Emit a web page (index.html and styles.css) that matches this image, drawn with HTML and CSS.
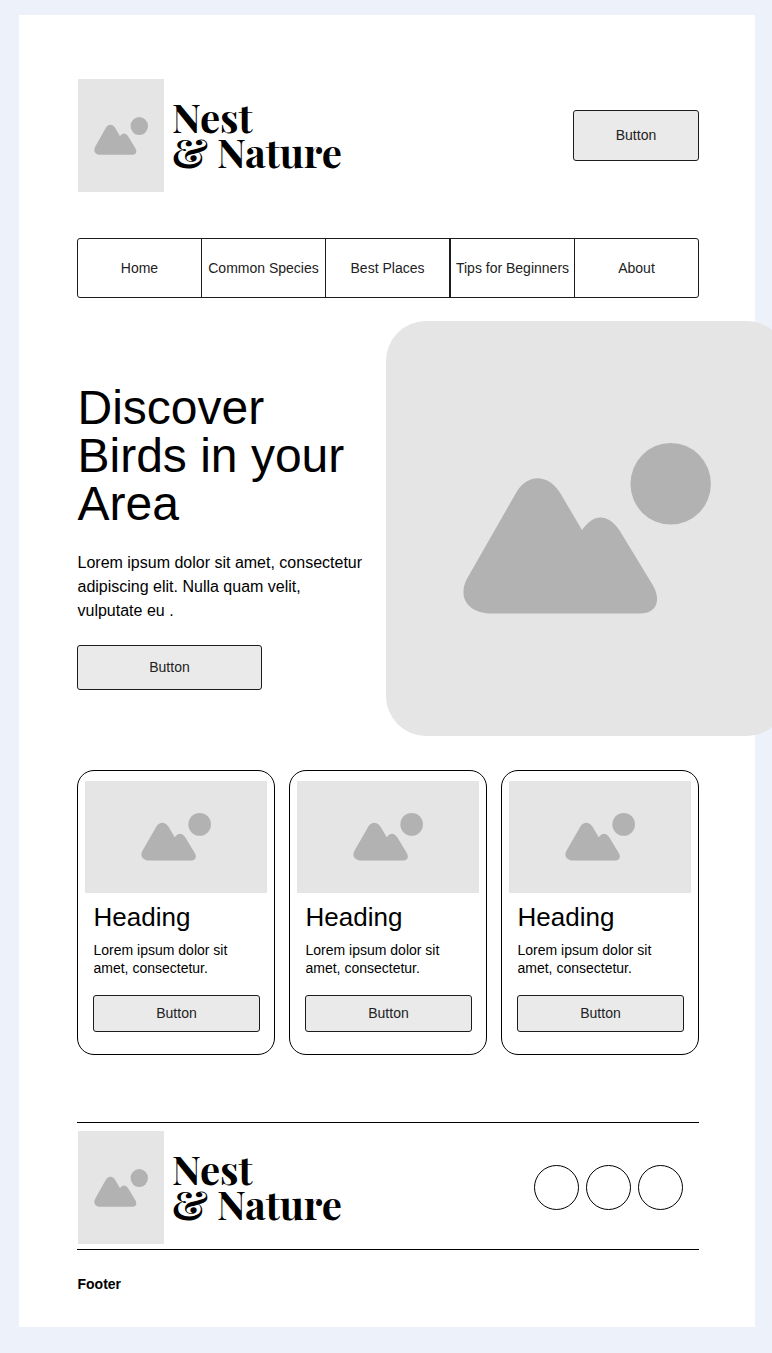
FILE: index.html
```
<!DOCTYPE html>
<html lang="en">
<head>
<meta charset="utf-8">
<title>Nest &amp; Nature</title>
<link rel="stylesheet" href="styles.css">
</head>
<body>
<svg class="defs" width="0" height="0" aria-hidden="true">
  <symbol id="picture" viewBox="0 0 249 172" preserveAspectRatio="none">
    <ellipse cx="208.7" cy="40.8" rx="40.2" ry="40.8"/>
    <path d="M54.7 48.7C66 31 85.5 30.5 98 49.7L120 87C131 71 145 69.500 157.300 87L191.300 143C199.500 158 194 170.500 178 170.500H29C8 170.500-5 156 4.700 136.300Z"/>
  </symbol>
</svg>
<main class="page">
  <header class="header">
    <div class="brand">
      <div class="placeholder brand-image"><svg class="brand-icon"><use href="#picture"/></svg></div>
      <div class="brand-name">Nest<br>&amp; Nature</div>
    </div>
    <button class="button header-button">Button</button>
  </header>

  <nav class="nav">
    <a class="nav-item">Home</a>
    <a class="nav-item">Common Species</a>
    <a class="nav-item nav-item-strong">Best Places</a>
    <a class="nav-item">Tips for Beginners</a>
    <a class="nav-item">About</a>
  </nav>

  <section class="hero">
    <div class="hero-copy">
      <h1 class="hero-title">Discover Birds in your Area</h1>
      <p class="hero-text">Lorem ipsum dolor sit amet, consectetur adipiscing elit. Nulla quam velit, vulputate eu .</p>
      <button class="button hero-button">Button</button>
    </div>
    <div class="placeholder hero-image"><svg class="hero-icon"><use href="#picture"/></svg></div>
  </section>

  <section class="cards">
    <article class="card">
      <div class="placeholder card-image"><svg class="card-icon"><use href="#picture"/></svg></div>
      <h2 class="card-title">Heading</h2>
      <p class="card-text">Lorem ipsum dolor sit amet, consectetur.</p>
      <button class="button card-button">Button</button>
    </article>
    <article class="card">
      <div class="placeholder card-image"><svg class="card-icon"><use href="#picture"/></svg></div>
      <h2 class="card-title">Heading</h2>
      <p class="card-text">Lorem ipsum dolor sit amet, consectetur.</p>
      <button class="button card-button">Button</button>
    </article>
    <article class="card">
      <div class="placeholder card-image"><svg class="card-icon"><use href="#picture"/></svg></div>
      <h2 class="card-title">Heading</h2>
      <p class="card-text">Lorem ipsum dolor sit amet, consectetur.</p>
      <button class="button card-button">Button</button>
    </article>
  </section>

  <footer>
    <div class="footer-bar">
      <div class="brand">
        <div class="placeholder brand-image"><svg class="brand-icon"><use href="#picture"/></svg></div>
        <div class="brand-name">Nest<br>&amp; Nature</div>
      </div>
      <div class="social">
        <span class="social-item"></span>
        <span class="social-item"></span>
        <span class="social-item"></span>
      </div>
    </div>
    <p class="footer-text">Footer</p>
  </footer>
</main>
</body>
</html>
```

FILE: styles.css
```
* { box-sizing: border-box; }

html { overflow: hidden; }

body {
  margin: 0;
  padding: 15px 0 26px 19px;
  background: #edf1f9;
  color: #000;
  font-family: "Liberation Sans", Arial, sans-serif;
}

h1, h2, p { margin: 0; font-weight: 400; }

.defs { display: block; }

.page {
  width: 736px;
  height: 1312px;
  padding: 64px 56px 0 58px;
  background: #fff;
}

.placeholder {
  display: flex;
  align-items: center;
  justify-content: center;
  flex: none;
  background: #e5e5e5;
  fill: #b2b2b2;
}

.button {
  display: block;
  padding: 0 0 2px;
  border: 1px solid #1c1c1f;
  border-radius: 3px;
  background: #eaeaea;
  color: #222;
  font: 14px/18px "Liberation Sans", Arial, sans-serif;
}

.header {
  display: flex;
  align-items: center;
  justify-content: space-between;
  height: 113px;
}

.brand {
  display: flex;
  align-items: center;
  padding-left: 0.5px;
}

.brand-image { width: 86.5px; height: 113px; }
.brand-icon { width: 54px; height: 38px; }

.brand-name {
  padding: 0 0 3px 8px;
  font: bold 40px/35px "Playfair Display", "Liberation Serif", "Times New Roman", serif;
  letter-spacing: -0.1px;
  white-space: nowrap;
}

.header-button { width: 126px; height: 51px; }

.nav {
  display: grid;
  grid-template-columns: 124px 124px 125px 124px 123px;
  height: 60px;
  margin-top: 46px;
  border: 1px solid #1c1c1f;
  border-radius: 3px;
}

.nav-item {
  display: flex;
  align-items: center;
  justify-content: center;
  border-right: 1px solid #1c1c1f;
  color: #222;
  font-size: 14px;
  white-space: nowrap;
}

.nav-item-strong { border-right-width: 2px; }
.nav-item:last-child { border-right: 0; }

.hero {
  display: flex;
  height: 415px;
  margin-top: 23px;
}

.hero-copy {
  flex: none;
  width: 309px;
  padding-top: 62px;
}

.hero-title {
  width: 281px;
  padding: 1px 0 0 0.5px;
  font-size: 48px;
  line-height: 48px;
}

.hero-text {
  width: 292px;
  margin: 23px 0 22px;
  padding-left: 0.5px;
  font-size: 16px;
  line-height: 24px;
}

.hero-button { width: 185px; height: 45px; }

.hero-image { width: 401px; border-radius: 40px; }
.hero-icon { width: 249px; height: 172px; }

.cards {
  display: grid;
  grid-template-columns: repeat(3, 198px);
  gap: 14px;
  margin-top: 34px;
}

.card {
  height: 285px;
  padding: 10px 7px;
  border: 1px solid #000;
  border-radius: 17px;
}

.card-image { height: 112px; }
.card-icon { width: 70px; height: 48px; }

.card-title {
  margin: 9px 0 0 8.5px;
  font-size: 26px;
  line-height: 30px;
}

.card-text {
  width: 150px;
  margin: 9px 0 0 8.5px;
  font-size: 14px;
  line-height: 18px;
}

.card-button { width: 167px; height: 37px; margin: 18px 0 0 8px; }

.footer-bar {
  display: flex;
  align-items: center;
  justify-content: space-between;
  height: 128px;
  margin-top: 67px;
  padding: 3px 16px 0 0;
  border-top: 1px solid #000;
  border-bottom: 1px solid #000;
}

.social { display: flex; gap: 7px; }

.social-item {
  width: 45px;
  height: 45px;
  border: 1px solid #000;
  border-radius: 50%;
}

.footer-text {
  margin-top: 25px;
  padding-left: 0.5px;
  font-size: 14px;
  font-weight: 700;
  line-height: 18px;
}
```
